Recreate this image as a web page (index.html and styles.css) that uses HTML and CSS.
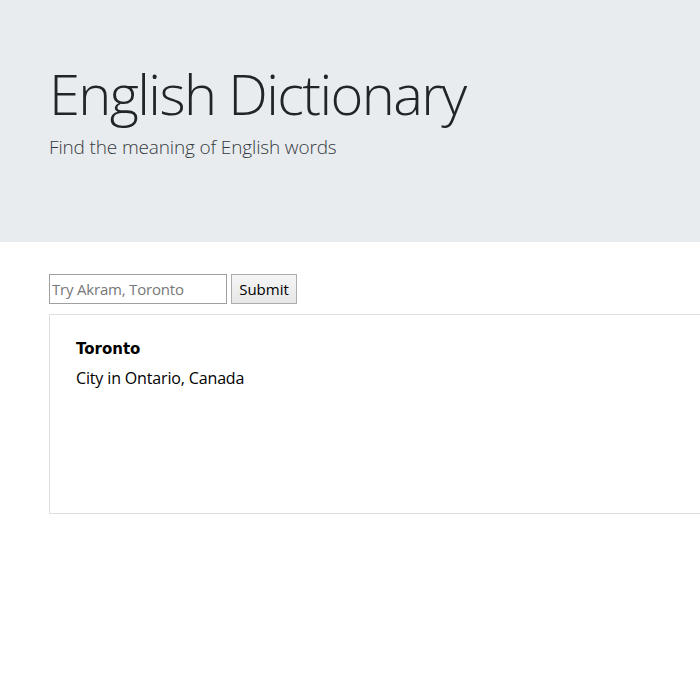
FILE: index.html
```html
<!DOCTYPE html>
<html lang="en">
<head>
<meta charset="utf-8">
<title>English Dictionary</title>
<link rel="stylesheet" href="styles.css">
</head>
<body>
<header class="hero">
  <div class="wrap">
    <h1 class="title">English Dictionary</h1>
    <p class="lead">Find the meaning of English words</p>
  </div>
</header>
<main class="wrap">
  <form class="search">
    <input class="field" type="text" placeholder="Try Akram, Toronto">
    <button class="btn" type="button">Submit</button>
  </form>
  <section class="card">
    <div class="word">Toronto</div>
    <div class="meaning">City in Ontario, Canada</div>
  </section>
</main>
</body>
</html>
```
FILE: styles.css
```css
html, body {
  margin: 0;
  padding: 0;
  overflow: hidden;
}
body {
  font-family: "Open Sans", "Noto Sans", sans-serif;
  color: #212529;
  background: #fff;
}
.wrap {
  padding-left: 49px;
}
.hero {
  background: #e9ecef;
  height: 242px;
  box-sizing: border-box;
  padding-top: 60px;
}
.title {
  margin: 0;
  font-weight: 300;
  font-size: 56px;
  line-height: 67px;
  letter-spacing: -1.6px;
}
.lead {
  margin: 6px 0 0;
  font-weight: 300;
  font-size: 19px;
  line-height: 28px;
  letter-spacing: -0.15px;
  color: #343a40;
}
.search {
  display: flex;
  gap: 4px;
  margin-top: 32px;
  height: 30px;
}
.field {
  box-sizing: border-box;
  width: 178px;
  height: 30px;
  margin: 0;
  border: 1px solid #a0a0a0;
  padding: 0 2px;
  font-family: "Open Sans", sans-serif;
  font-size: 15px;
  letter-spacing: -0.2px;
  color: #333;
  background: #fff;
}
.field::placeholder {
  color: #777;
}
.btn {
  box-sizing: border-box;
  height: 30px;
  width: 66px;
  margin: 0;
  border: 1px solid #adadad;
  background: linear-gradient(#f6f6f6, #e6e6e6);
  font-family: "Open Sans", sans-serif;
  font-size: 15px;
  color: #000;
  padding: 0;
}
.card {
  box-sizing: border-box;
  margin-top: 10px;
  width: 651px;
  height: 200px;
  border: 1px solid #dfdfdf;
  border-right: none;
  padding: 24px 26px;
}
.word {
  font-family: "DejaVu Sans", sans-serif;
  font-weight: bold;
  font-size: 15px;
  line-height: 20px;
  color: #000;
}
.meaning {
  margin-top: 9px;
  font-size: 16px;
  line-height: 20px;
  font-weight: 500;
  letter-spacing: -0.15px;
  color: #000;
}
```
